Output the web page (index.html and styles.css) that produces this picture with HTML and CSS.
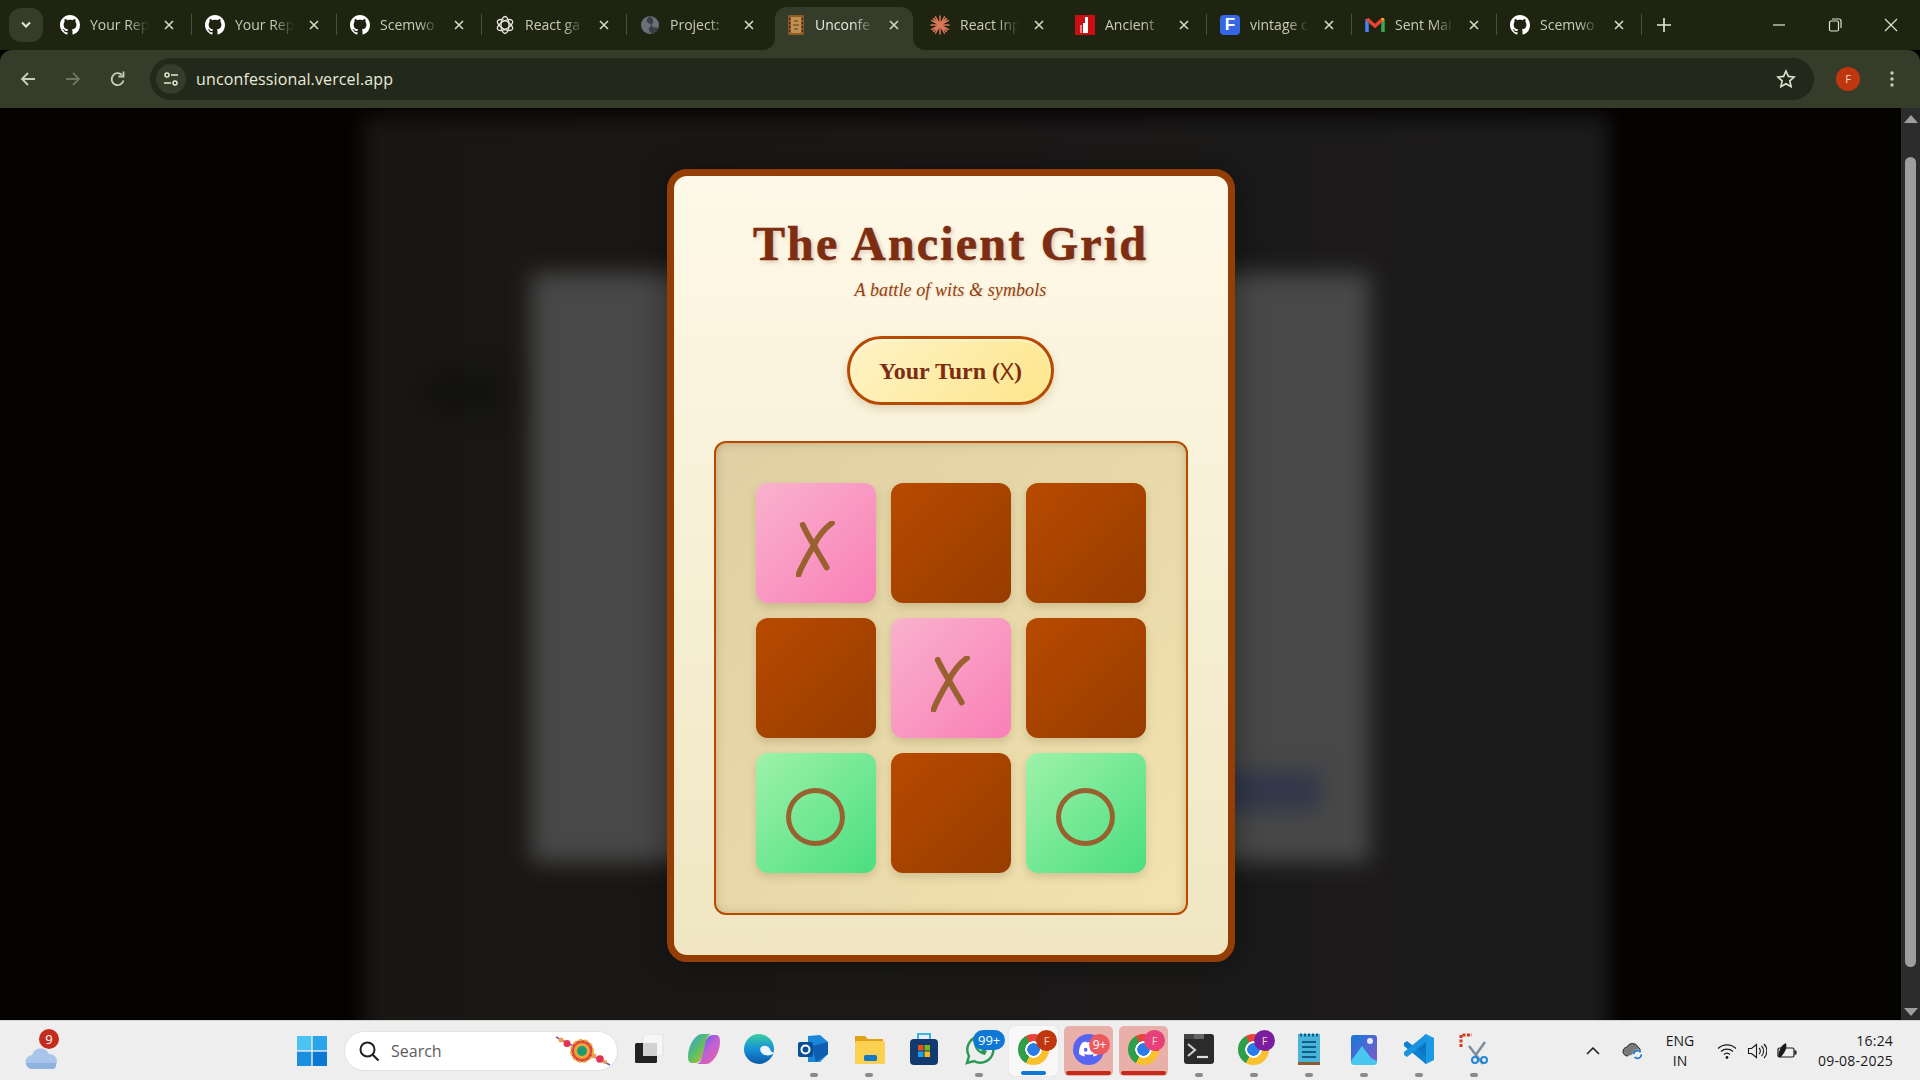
FILE: index.html
```html
<!DOCTYPE html>
<html lang="en">
<head>
<meta charset="utf-8">
<title>Unconfessional</title>
<link rel="stylesheet" href="styles.css">
</head>
<body>
<svg class="defs" width="0" height="0">
  <defs>
    <symbol id="gh" viewBox="0 0 16 16"><path fill="#fff" d="M8 0C3.58 0 0 3.58 0 8c0 3.54 2.29 6.53 5.47 7.59.4.07.55-.17.55-.38 0-.19-.01-.82-.01-1.49-2.01.37-2.53-.49-2.69-.94-.09-.23-.48-.94-.82-1.13-.28-.15-.68-.52-.01-.53.63-.01 1.08.58 1.23.82.72 1.21 1.87.87 2.33.66.07-.52.28-.87.51-1.07-1.78-.2-3.64-.89-3.64-3.95 0-.87.31-1.59.82-2.15-.08-.2-.36-1.02.08-2.12 0 0 .67-.21 2.2.82.64-.18 1.32-.27 2-.27.68 0 1.36.09 2 .27 1.53-1.04 2.2-.82 2.2-.82.44 1.1.16 1.92.08 2.12.51.56.82 1.27.82 2.15 0 3.07-1.87 3.75-3.65 3.95.29.25.54.73.54 1.48 0 1.07-.01 1.93-.01 2.2 0 .21.15.46.55.38A8.013 8.013 0 0016 8c0-4.42-3.58-8-8-8z"/></symbol>
    <symbol id="cross" viewBox="0 0 10 10"><path d="M1 1l8 8M9 1l-8 8" stroke="#d5d9c5" stroke-width="1.6" fill="none"/></symbol>
    <symbol id="markx" viewBox="0 0 40 56"><path d="M6.700 3.800C10 11 14 18 19 26c3 6 8 14 11.700 20.500M36 2C28 8 22 16 18 24 12 34 6 44 2.500 53.700" fill="none" stroke="#996030" stroke-width="5.800" stroke-linecap="round"/></symbol>
  </defs>
</svg>

<div class="tabstrip">
  <div class="tab-menu"><svg width="12" height="8" viewBox="0 0 12 8"><path d="M2 1.500l4 4 4-4" stroke="#e4e8d8" stroke-width="2" fill="none"/></svg></div>
  <div class="tabs">
    <div class="tab"><svg class="fav" viewBox="0 0 16 16"><use href="#gh"/></svg><span class="tab-title">Your Rep</span><svg class="tab-x" viewBox="0 0 10 10"><use href="#cross"/></svg></div>
    <div class="tab"><svg class="fav" viewBox="0 0 16 16"><use href="#gh"/></svg><span class="tab-title">Your Rep</span><svg class="tab-x" viewBox="0 0 10 10"><use href="#cross"/></svg></div>
    <div class="tab"><svg class="fav" viewBox="0 0 16 16"><use href="#gh"/></svg><span class="tab-title">Scemwo</span><svg class="tab-x" viewBox="0 0 10 10"><use href="#cross"/></svg></div>
    <div class="tab"><svg class="fav" viewBox="0 0 20 20"><g fill="none" stroke="#e8e8e0" stroke-width="1.300"><ellipse cx="10" cy="10" rx="8.500" ry="4" transform="rotate(30 10 10)"/><ellipse cx="10" cy="10" rx="8.500" ry="4" transform="rotate(90 10 10)"/><ellipse cx="10" cy="10" rx="8.500" ry="4" transform="rotate(150 10 10)"/></g></svg><span class="tab-title">React ga</span><svg class="tab-x" viewBox="0 0 10 10"><use href="#cross"/></svg></div>
    <div class="tab tab-plain"><svg class="fav" viewBox="0 0 20 20"><circle cx="10" cy="10" r="9" fill="#6a7078"/><path d="M10 1c-3 2-4 4-3 6s4 1 4 3-3 2-2 5 2 3 3 4c3-1 5-3 6-6-2-1-5 0-6-2s2-3 1-6-2-3-3-4z" fill="#3a3f46"/></svg><span class="tab-title">Project: </span><svg class="tab-x" viewBox="0 0 10 10"><use href="#cross"/></svg></div>
    <div class="tab tab-active"><i class="flare-l"></i><i class="flare-r"></i><svg class="fav" viewBox="0 0 18 20"><rect x="1" y="0" width="16" height="20" rx="1.500" fill="#8a5a28"/><rect x="4" y="2" width="10" height="16" fill="#c09050"/><path d="M2.500 3v14M15.500 3v14" stroke="#3a2410" stroke-width="1.200" stroke-dasharray="2 2"/><path d="M7 6h4M6 10h6M7 14h4" stroke="#5a3a1a" stroke-width="1.200"/></svg><span class="tab-title">Unconfe</span><svg class="tab-x" viewBox="0 0 10 10"><use href="#cross"/></svg></div>
    <div class="tab tab-plain"><svg class="fav" viewBox="0 0 20 20"><g stroke="#d97757" stroke-width="1.500" stroke-linecap="round"><path d="M10 1v18M1 10h18M3.600 3.600l12.800 12.800M16.400 3.600L3.600 16.400M5.500 1.800l9 16.400M14.500 1.800l-9 16.400M1.800 5.500l16.400 9M18.200 5.500l-16.400 9"/></g></svg><span class="tab-title tab-title-long">React Inp</span><svg class="tab-x" viewBox="0 0 10 10"><use href="#cross"/></svg></div>
    <div class="tab"><svg class="fav" viewBox="0 0 20 20"><rect width="20" height="20" fill="#c80f14"/><path d="M8 18V8h2V2h3v16z" fill="#fff"/><path d="M6 10v8" stroke="#f0b0b0" stroke-width="1.500"/></svg><span class="tab-title">Ancient </span><svg class="tab-x" viewBox="0 0 10 10"><use href="#cross"/></svg></div>
    <div class="tab"><span class="fav fav-f">F</span><span class="tab-title">vintage c</span><svg class="tab-x" viewBox="0 0 10 10"><use href="#cross"/></svg></div>
    <div class="tab"><svg class="fav" viewBox="0 0 20 20"><path d="M2 4v13" stroke="#4285f4" stroke-width="3.500"/><path d="M18 4v13" stroke="#34a853" stroke-width="3.500"/><path d="M2 4l8 7 8-7" stroke="#ea4335" stroke-width="3.500" fill="none"/><path d="M16 3l3 0-1 4z" fill="#fbbc04"/></svg><span class="tab-title">Sent Mai</span><svg class="tab-x" viewBox="0 0 10 10"><use href="#cross"/></svg></div>
    <div class="tab"><svg class="fav" viewBox="0 0 16 16"><use href="#gh"/></svg><span class="tab-title">Scemwo</span><svg class="tab-x" viewBox="0 0 10 10"><use href="#cross"/></svg></div>
  </div>
  <svg class="tab-plus" width="14" height="14" viewBox="0 0 14 14"><path d="M7 0v14M0 7h14" stroke="#e4e8d8" stroke-width="1.600"/></svg>
  <div class="win-controls">
    <svg width="14" height="14" viewBox="0 0 14 14"><path d="M1 7h12" stroke="#dfe3d3" stroke-width="1.200"/></svg>
    <svg width="14" height="14" viewBox="0 0 14 14"><rect x="1.500" y="3" width="9" height="10" rx="1.500" fill="none" stroke="#dfe3d3" stroke-width="1.200"/><path d="M4 1h7a2 2 0 012 2v7" fill="none" stroke="#dfe3d3" stroke-width="1.200"/></svg>
    <svg width="14" height="14" viewBox="0 0 14 14"><path d="M1 1l12 12M13 1L1 13" stroke="#dfe3d3" stroke-width="1.200"/></svg>
  </div>
</div>

<div class="toolbar">
  <div class="nav">
    <svg width="18" height="18" viewBox="0 0 18 18"><path d="M16 9H3M9 3L3 9l6 6" stroke="#c9cdb9" stroke-width="1.800" fill="none"/></svg>
    <svg width="18" height="18" viewBox="0 0 18 18"><path d="M2 9h13M9 3l6 6-6 6" stroke="#6f7461" stroke-width="1.800" fill="none"/></svg>
    <svg width="18" height="18" viewBox="0 0 18 18"><path d="M14.500 10.500A6 6 0 1 1 13 5" stroke="#c9cdb9" stroke-width="1.800" fill="none"/><path d="M14.500 1.500v5h-5" stroke="#c9cdb9" stroke-width="1.800" fill="none"/></svg>
  </div>
  <div class="omnibox">
    <span class="site-info"><svg width="16" height="16" viewBox="0 0 16 16"><g fill="none" stroke="#e4e8d8" stroke-width="1.500"><circle cx="4" cy="4" r="2"/><path d="M8 4h7M1 12h7"/><circle cx="12" cy="12" r="2"/></g></svg></span>
    <span class="url">unconfessional.vercel.app</span>
    <svg class="star" width="20" height="20" viewBox="0 0 20 20"><path d="M10 2l2.400 5.400 5.800.6-4.400 3.900 1.300 5.800L10 14.700l-5.100 3 1.300-5.800L1.800 8l5.800-.6z" fill="none" stroke="#dfe3d3" stroke-width="1.600"/></svg>
  </div>
  <span class="avatar">F</span>
  <svg class="kebab" width="4" height="18" viewBox="0 0 4 18"><g fill="#c9cdb9"><circle cx="2" cy="3" r="1.700"/><circle cx="2" cy="9" r="1.700"/><circle cx="2" cy="15" r="1.700"/></g></svg>
</div>

<div class="main">
  <div class="viewport">
    <div class="backdrop"><div class="bd-mid"></div><div class="bd-light"></div><div class="bd-blue"></div><div class="bd-dark"></div></div>
    <div class="card">
      <h1 class="title">The Ancient Grid</h1>
      <p class="subtitle">A battle of wits &amp; symbols</p>
      <div class="turn">Your Turn (<span class="turn-x">X</span>)</div>
      <div class="board">
        <div class="cell cell-x"><svg class="mark" viewBox="0 0 40 56"><use href="#markx"/></svg></div>
        <div class="cell"></div>
        <div class="cell"></div>
        <div class="cell"></div>
        <div class="cell cell-x"><svg class="mark" viewBox="0 0 40 56"><use href="#markx"/></svg></div>
        <div class="cell"></div>
        <div class="cell cell-o"><span class="ring"></span></div>
        <div class="cell"></div>
        <div class="cell cell-o"><span class="ring"></span></div>
      </div>
    </div>
  </div>
  <div class="scrollbar">
    <i class="sb-up"></i>
    <i class="sb-thumb"></i>
    <i class="sb-down"></i>
  </div>
</div>

<div class="taskbar">
  <div class="weather">
    <svg width="34" height="24" viewBox="0 0 34 24"><path d="M9 23a7 7 0 0 1-1-14 9 9 0 0 1 17-1 7.500 7.500 0 0 1 1 15z" fill="#a9c6ea"/><path d="M2 17h30v2a4 4 0 0 1-4 4H8a6 6 0 0 1-6-6z" fill="#8fb2e0"/></svg>
    <span class="weather-badge">9</span>
  </div>
  <svg class="start" width="30" height="30" viewBox="0 0 30 30"><rect width="14.300" height="14.300" fill="#4cc2f5"/><rect x="15.700" width="14.300" height="14.300" fill="#2aa4ea"/><rect y="15.700" width="14.300" height="14.300" fill="#1a8fe0"/><rect x="15.700" y="15.700" width="14.300" height="14.300" fill="#0b78d4"/></svg>
  <div class="search">
    <svg width="22" height="22" viewBox="0 0 22 22"><circle cx="9.500" cy="9.500" r="7" fill="none" stroke="#222" stroke-width="2"/><path d="M14.500 14.500l6 6" stroke="#222" stroke-width="2.200"/></svg>
    <span class="search-text">Search</span>
    <svg class="rakhi" width="58" height="32" viewBox="0 0 58 32"><path d="M2 2l54 28" stroke="#7a60b0" stroke-width="1.500"/><circle cx="7" cy="5" r="2.500" fill="#e8a050"/><circle cx="13" cy="8.500" r="3.500" fill="#e83050"/><circle cx="46" cy="24" r="3.800" fill="#e83050"/><circle cx="40" cy="21" r="2.500" fill="#e8a050"/><circle cx="51" cy="27" r="2" fill="#e8a050"/><circle cx="28" cy="16" r="11" fill="#e04040" stroke="#e8a838" stroke-width="2" stroke-dasharray="4 2"/><circle cx="28" cy="16" r="8" fill="#e8a838"/><circle cx="28" cy="16" r="5" fill="#1f9a70"/></svg>
  </div>
  <div class="apps">
    <div class="app"><svg width="30" height="30" viewBox="0 0 30 30"><rect x="9" y="0" width="20" height="22" rx="1" fill="#f6f6f6" stroke="#e0e0e0"/><rect x="1" y="9" width="22" height="20" rx="1.500" fill="#222"/><rect x="9" y="9" width="14" height="13" fill="#d2d2d2"/></svg></div>
    <div class="app"><svg width="32" height="32" viewBox="0 0 32 32"><defs><linearGradient id="cop1" x1="0" y1="0" x2="1" y2="1"><stop offset="0" stop-color="#2aa0e8"/><stop offset=".5" stop-color="#60c060"/><stop offset="1" stop-color="#f0b020"/></linearGradient><linearGradient id="cop2" x1="0" y1="0" x2="1" y2="1"><stop offset="0" stop-color="#3060e0"/><stop offset=".5" stop-color="#c060d8"/><stop offset="1" stop-color="#f06090"/></linearGradient></defs><path d="M9 3c1-1 3-2 5-2h9c-3 1-4 3-5 7l-3 13c-1 5-3 9-8 9H4c-3 0-4-3-4-6 0-8 3-16 9-21z" fill="url(#cop1)"/><path d="M23 29c-1 1-3 2-5 2H9c3-1 4-3 5-7l3-13c1-5 3-9 8-9h3c3 0 4 3 4 6 0 8-3 16-9 21z" fill="url(#cop2)"/></svg></div>
    <div class="app"><svg width="32" height="32" viewBox="0 0 32 32"><defs><linearGradient id="edge" x1="0" y1="0" x2="0" y2="1"><stop offset="0" stop-color="#38d0a0"/><stop offset=".5" stop-color="#1890d8"/><stop offset="1" stop-color="#0c5aa8"/></linearGradient></defs><circle cx="16" cy="16" r="15" fill="url(#edge)"/><path d="M31 20c-2 2-6 3-9 2-4-1-6-5-4-8 2-2 7-2 9 2 1 2 0 2 4 4z" fill="#eef5fa"/></svg></div>
    <div class="app has-dot"><svg width="32" height="30" viewBox="0 0 32 30"><path d="M10 2l12-1 8 7v12l-8 8H10z" fill="#1a88d8"/><path d="M14 12l16-4v12l-12 8z" fill="#0f5fb0"/><rect x="0" y="8" width="15" height="15" rx="2" fill="#0a4e9a"/><circle cx="7.500" cy="15.500" r="4" fill="none" stroke="#fff" stroke-width="2"/></svg></div>
    <div class="app has-dot"><svg width="32" height="32" viewBox="0 0 32 32"><path d="M2 3h10l3 3h15v6H2z" fill="#e0a010"/><rect x="2" y="8" width="30" height="23" rx="1.500" fill="#fcd050"/><rect x="11" y="22" width="13" height="6" rx="1.500" fill="#1478c8"/></svg></div>
    <div class="app"><svg width="30" height="34" viewBox="0 0 30 34"><path d="M9 7V2h12v5" fill="none" stroke="#38b8e8" stroke-width="2"/><rect x="1" y="7" width="28" height="26" rx="4" fill="#123a70"/><rect x="9" y="13" width="5.500" height="5.500" fill="#e8501c"/><rect x="15.500" y="13" width="5.500" height="5.500" fill="#7cb81c"/><rect x="9" y="19.500" width="5.500" height="5.500" fill="#1ca0e8"/><rect x="15.500" y="19.500" width="5.500" height="5.500" fill="#f8b81c"/></svg></div>
    <div class="app has-dot"><svg width="32" height="34" viewBox="0 0 32 34"><path d="M4 31l2-7A13 13 0 1 1 11 29z" fill="none" stroke="#2a9a50" stroke-width="2.500"/><path d="M11 11c0 6 5 11 11 12l2-4-4-2-2 2c-2-1-3-3-4-4l2-2-2-4z" fill="#2a9a50"/></svg><span class="badge badge-wa">99+</span></div>
    <div class="app app-open">
      <span class="chrome"></span><span class="cbadge cbadge-red">F</span><i class="indicator indicator-blue"></i>
    </div>
    <div class="app app-alert">
      <span class="disc"><svg width="20" height="20" viewBox="0 0 24 24"><path fill="#fff" d="M20.317 4.37a19.791 19.791 0 0 0-4.885-1.515.074.074 0 0 0-.079.037c-.21.375-.444.864-.608 1.25a18.27 18.27 0 0 0-5.487 0 12.64 12.64 0 0 0-.617-1.25.077.077 0 0 0-.079-.037A19.736 19.736 0 0 0 3.677 4.37a.07.07 0 0 0-.032.027C.533 9.046-.32 13.58.099 18.057a.082.082 0 0 0 .031.057 19.9 19.9 0 0 0 5.993 3.03.078.078 0 0 0 .084-.028 14.09 14.09 0 0 0 1.226-1.994.076.076 0 0 0-.041-.106 13.107 13.107 0 0 1-1.872-.892.077.077 0 0 1-.008-.128 10.2 10.2 0 0 0 .372-.292.074.074 0 0 1 .077-.01c3.928 1.793 8.18 1.793 12.062 0a.074.074 0 0 1 .078.01c.12.098.246.198.373.292a.077.077 0 0 1-.006.127 12.299 12.299 0 0 1-1.873.892.077.077 0 0 0-.041.107c.36.698.772 1.362 1.225 1.993a.076.076 0 0 0 .084.028 19.839 19.839 0 0 0 6.002-3.03.077.077 0 0 0 .032-.054c.5-5.177-.838-9.674-3.549-13.66a.061.061 0 0 0-.031-.03zM8.020 15.330c-1.183 0-2.157-1.085-2.157-2.419 0-1.333.956-2.419 2.157-2.419 1.210 0 2.176 1.096 2.157 2.420 0 1.333-.956 2.418-2.157 2.418zm7.975 0c-1.183 0-2.157-1.085-2.157-2.419 0-1.333.955-2.419 2.157-2.419 1.210 0 2.176 1.096 2.157 2.420 0 1.333-.946 2.418-2.157 2.418z"/></svg></span>
      <span class="cbadge cbadge-disc">9+</span><i class="indicator indicator-red"></i>
    </div>
    <div class="app app-alert">
      <span class="chrome"></span><span class="cbadge cbadge-pink">F</span><i class="indicator indicator-red"></i>
    </div>
    <div class="app has-dot"><svg width="30" height="30" viewBox="0 0 30 30"><rect width="30" height="30" rx="3" fill="#2b2b2b"/><rect x="10" width="10" height="5" fill="#666"/><rect width="10" height="5" fill="#444"/><path d="M4 10l7 6-7 6" stroke="#ccc" stroke-width="2.200" fill="none"/><path d="M13 23h11" stroke="#ddd" stroke-width="2.200"/></svg></div>
    <div class="app has-dot"><span class="chrome"></span><span class="cbadge cbadge-purple">F</span></div>
    <div class="app has-dot"><svg width="24" height="34" viewBox="0 0 24 34"><rect x="1" y="2" width="22" height="30" fill="#48b4d8"/><rect x="1" y="30" width="22" height="3" fill="#8a5a30"/><path d="M5 10h14M5 15h14M5 20h14M5 25h14" stroke="#0c5f88" stroke-width="2"/><path d="M3 3h18" stroke="#0c5f88" stroke-width="3" stroke-dasharray="2 2"/></svg></div>
    <div class="app has-dot"><svg width="28" height="32" viewBox="0 0 28 32"><defs><linearGradient id="ph" x1="0" y1="0" x2="1" y2="1"><stop offset="0" stop-color="#1478d8"/><stop offset="1" stop-color="#8858c8"/></linearGradient></defs><rect x="1" y="2" width="26" height="29" rx="3" fill="url(#ph)"/><circle cx="20" cy="8" r="3" fill="#e8e8f8"/><path d="M1 28l11-15 9 12 6 3v1a3 3 0 0 1-3 3H4a3 3 0 0 1-3-3z" fill="#48c8f0"/></svg></div>
    <div class="app has-dot"><svg width="32" height="32" viewBox="0 0 32 32"><path d="M23 1l8 4v22l-8 4L9 17z" fill="#1a9ae0"/><path d="M23 1v30L9 17z" fill="#0e74c8"/><path d="M1 10l3-2 19 15v8L1 13z" fill="#0f80d0"/><path d="M1 22l3 2 19-15V1L1 19z" fill="#1a94e0"/></svg></div>
    <div class="app has-dot"><svg width="30" height="34" viewBox="0 0 30 34"><path d="M2 15V3h11" fill="none" stroke="#d8381c" stroke-width="3" stroke-dasharray="3 1.500"/><path d="M10 14l14 18M26 10L16 24" stroke="#7a8ea0" stroke-width="2.500"/><circle cx="16" cy="28" r="3" fill="none" stroke="#2088d8" stroke-width="2"/><circle cx="25" cy="28" r="3" fill="none" stroke="#2088d8" stroke-width="2"/></svg></div>
  </div>
  <div class="tray">
    <svg width="14" height="8" viewBox="0 0 14 8"><path d="M1 7l6-6 6 6" stroke="#1a1a1a" stroke-width="1.500" fill="none"/></svg>
    <svg class="tray-cloud" width="22" height="18" viewBox="0 0 22 18"><path d="M6 14a4.500 4.500 0 0 1-1-9 6 6 0 0 1 11 0 4 4 0 0 1 2 5" fill="#7a7a7a" stroke="#2a2a2a" stroke-width="1"/><circle cx="15.500" cy="12.500" r="5" fill="#eee"/><circle cx="15.500" cy="12.500" r="3.800" fill="none" stroke="#1a78d0" stroke-width="1.800" stroke-dasharray="9 3"/></svg>
    <div class="lang"><span>ENG</span><span>IN</span></div>
    <svg class="tray-wifi" width="20" height="16" viewBox="0 0 20 16"><g fill="none" stroke="#1a1a1a" stroke-width="1.200"><path d="M1 5.500a13 13 0 0 1 18 0"/><path d="M4 8.500a9 9 0 0 1 12 0"/><path d="M7 11.500a4.500 4.500 0 0 1 6 0"/></g><circle cx="10" cy="14.500" r="1.400" fill="#1a1a1a"/></svg>
    <svg class="tray-vol" width="20" height="18" viewBox="0 0 20 18"><path d="M1.500 6.500h3l5-4v13l-5-4h-3z" fill="none" stroke="#1a1a1a" stroke-width="1.100"/><g fill="none" stroke="#1a1a1a" stroke-width="1.100"><path d="M12 6a4 4 0 0 1 0 6"/><path d="M14.500 4a7 7 0 0 1 0 10"/><path d="M17 2a10 10 0 0 1 0 14"/></g></svg>
    <svg class="tray-batt" width="20" height="18" viewBox="0 0 20 18"><rect x="1" y="6" width="16" height="9" rx="1.500" fill="none" stroke="#1a1a1a" stroke-width="1.200"/><rect x="17.500" y="8.500" width="2" height="4" fill="#1a1a1a"/><path d="M1 15c1-7 3-12 8-14 1 4 0 7-2 10l-3 4z" fill="#1a1a1a"/></svg>
    <div class="clock"><span>16:24</span><span>09-08-2025</span></div>
  </div>
</div>
</body>
</html>
```

FILE: styles.css
```css
* { box-sizing: border-box; }
html, body { margin: 0; height: 100%; overflow: hidden; }
body { display: flex; flex-direction: column; width: 1920px; height: 1080px; font-family: "Open Sans", "Noto Sans", sans-serif; background: #000; }
.defs { position: absolute; }

/* tab strip */
.tabstrip { display: flex; align-items: center; height: 50px; background: #1e2410; padding-left: 9px; flex: none; }
.tab-menu { display: flex; align-items: center; justify-content: center; width: 34px; height: 34px; margin-top: -1px; border-radius: 12px; background: #363c2a; flex: none; }
.tabs { display: flex; margin-left: 4px; height: 50px; flex: none; }
.tab { position: relative; display: flex; align-items: center; width: 145px; height: 50px; padding-left: 13px; flex: none; }
.tab::after { content: ""; position: absolute; right: 0; top: 14px; height: 21px; width: 1px; background: #4a5040; }
.tab-plain::after, .tab-active::after { display: none; }
.tab-active { background: #363c2a; width: 138px; margin: 7px 4px 0 3px; height: 43px; border-radius: 12px 12px 0 0; padding-left: 11px; }
.tab-active .fav { margin-top: -7px; }
.tab-active .tab-title { margin-top: -7px; margin-left: 9px; color: #e8ebdc; }
.tab-active .tab-x { left: 114px; top: 13px; }
.flare-l, .flare-r { position: absolute; bottom: 0; width: 12px; height: 12px; overflow: hidden; }
.flare-l { left: -12px; }
.flare-r { right: -12px; }
.flare-l::before, .flare-r::before { content: ""; position: absolute; width: 24px; height: 24px; border-radius: 50%; box-shadow: 0 0 0 12px #363c2a; bottom: 0; }
.flare-l::before { right: 0; }
.flare-r::before { left: 0; }
.fav { display: block; width: 20px; height: 20px; flex: none; }
.fav-f { display: flex; align-items: center; justify-content: center; border-radius: 4px; background: #3367e6; color: #fff; font: 700 17px "Liberation Sans", sans-serif; }
.tab-title { width: 59px; margin-left: 10px; overflow: hidden; white-space: pre; font-size: 14px; line-height: 20px; color: #c8ccb8; -webkit-mask-image: linear-gradient(to right, #000 65%, transparent 100%); mask-image: linear-gradient(to right, #000 65%, transparent 100%); }
.tab-title-long { width: 64px; -webkit-mask-image: linear-gradient(to right, #000 60%, transparent 92%); mask-image: linear-gradient(to right, #000 60%, transparent 92%); }
.tab-x { position: absolute; left: 117px; top: 20px; width: 10px; height: 10px; }
.tab-plus { margin-left: 15px; flex: none; }
.win-controls { display: flex; align-items: center; gap: 42px; margin-left: auto; margin-right: 22px; }

/* toolbar */
.toolbar { display: flex; align-items: center; height: 58px; background: #363c2a; border-radius: 12px 12px 0 0; flex: none; padding-bottom: 1px; }
.nav { display: flex; gap: 27px; align-items: center; width: 150px; padding-left: 19px; flex: none; }
.omnibox { display: flex; align-items: center; width: 1664px; height: 42px; border-radius: 21px; background: #22281a; padding-left: 6px; flex: none; margin-top: 1px; }
.site-info { display: flex; align-items: center; justify-content: center; width: 30px; height: 30px; border-radius: 50%; background: #363c2a; flex: none; }
.url { margin-left: 10px; font-size: 16px; color: #e8ebdc; letter-spacing: .13px; }
.star { margin-left: auto; margin-right: 18px; }
.avatar { display: flex; align-items: center; justify-content: center; width: 24px; height: 24px; margin-left: 22px; border-radius: 50%; background: #c0360f; color: #f4d8cc; font-size: 11px; flex: none; }
.kebab { margin-left: 30px; flex: none; }

/* page */
.main { display: flex; flex: 1; min-height: 0; }
.viewport { position: relative; flex: 1; display: flex; justify-content: center; align-items: flex-start; padding-top: 60px; background: #050302; overflow: hidden; border-top: 1px solid #050302; }
.backdrop { position: absolute; inset: 0; }
.bd-mid { position: absolute; left: 364px; top: 8px; width: 1244px; height: 960px; background: linear-gradient(90deg, #191714, #1c1b1c); filter: blur(10px); }
.bd-light { position: absolute; left: 531px; top: 164px; width: 839px; height: 589px; background: #484848; filter: blur(11px); }
.bd-blue { position: absolute; left: 1190px; top: 662px; width: 130px; height: 40px; background: #32384a; filter: blur(10px); }
.bd-dark { position: absolute; left: 425px; top: 268px; width: 75px; height: 30px; background: #0f0f0d; filter: blur(14px); }

.card { position: relative; width: 568px; height: 793px; padding: 40px 40px 0; border: 7px solid #943d04; border-radius: 20px; background: linear-gradient(180deg, #fef9e8 0%, #f0e6c2 100%); box-shadow: 0 0 30px rgba(0, 0, 0, .4); display: flex; flex-direction: column; align-items: center; }
.title { margin: 0; font: 700 48px/56px "Liberation Serif", serif; letter-spacing: 2.2px; color: #7c2d12; -webkit-text-stroke: .6px #7c2d12; text-shadow: 2px 2px 4px rgba(124, 45, 18, .25); white-space: nowrap; }
.subtitle { margin: 6px 0 0; font: italic 400 18px/24px "Liberation Serif", serif; letter-spacing: .1px; color: #92400e; text-shadow: 1px 1px 2px rgba(124, 45, 18, .15); }
.turn { display: flex; align-items: center; justify-content: center; width: 207px; height: 69px; margin-top: 34px; border: 3px solid #b84a00; border-radius: 35px; background: linear-gradient(135deg, #fef3c7, #fde68a); box-shadow: 0 4px 10px rgba(120, 80, 20, .2), inset 0 1px 3px rgba(255, 255, 255, .8); font: 700 24px/30px "Liberation Serif", serif; color: #7c2d12; white-space: pre; }
.turn-x { font: 400 24px/30px "Open Sans", sans-serif; }
.board { display: grid; grid-template-columns: repeat(3, 120px); grid-auto-rows: 120px; gap: 15px; width: 474px; height: 474px; margin-top: 36px; padding: 40px; border: 2px solid #b84a00; border-radius: 12px; background: linear-gradient(135deg, #dfcfa2, #f2e3b0); box-shadow: inset 0 0 10px rgba(90, 60, 20, .25); flex: none; }
.cell { display: flex; align-items: center; justify-content: center; border-radius: 12px; background: linear-gradient(135deg, #b84a00, #963c00); box-shadow: 0 4px 8px rgba(90, 60, 20, .18); }
.cell-x { background: linear-gradient(135deg, #f9b2cd, #f97fb7); }
.cell-o { background: linear-gradient(135deg, #9ef2aa, #4ade80); }
.mark { display: block; width: 40px; height: 56px; margin-top: 12px; }
.ring { display: block; width: 59px; height: 58px; margin-top: 8px; border: 5.500px solid #996030; border-radius: 50%; }

/* scrollbar */
.scrollbar { position: relative; display: flex; flex-direction: column; align-items: center; width: 19px; background: #2c2c2c; flex: none; }
.sb-up { width: 0; height: 0; margin-top: 7px; border: 7px solid transparent; border-top: 0; border-bottom: 8px solid #9e9e9e; }
.sb-thumb { width: 11px; height: 810px; margin-top: 34px; border-radius: 6px; background: #9e9e9e; }
.sb-down { width: 0; height: 0; margin-top: auto; margin-bottom: 4px; border: 7px solid transparent; border-bottom: 0; border-top: 8px solid #9e9e9e; }

/* taskbar */
.taskbar { display: flex; align-items: center; height: 60px; background: #eeeeee; border-top: 1px solid #d6d6d6; flex: none; }
.weather { position: relative; width: 60px; height: 58px; margin-left: 23px; flex: none; }
.weather svg { position: absolute; left: 1px; top: 24px; }
.weather-badge { position: absolute; left: 16px; top: 7px; width: 20px; height: 20px; border-radius: 50%; background: #c42b1c; color: #fff; font-size: 13px; line-height: 20px; text-align: center; }
.start { margin-left: 214px; flex: none; }
.search { display: flex; align-items: center; width: 274px; height: 40px; margin-left: 17px; padding-left: 13px; border-radius: 20px; background: #fff; border: 1px solid #e2e2e2; flex: none; }
.search-text { margin-left: 11px; font-size: 16px; color: #5c5c5c; }
.rakhi { margin-left: auto; margin-right: 5px; }
.apps { display: flex; margin-left: 3px; flex: none; }
.app { position: relative; display: flex; align-items: center; justify-content: center; width: 55px; height: 50px; flex: none; }
.app > svg, .app > .chrome, .app > .disc { margin-top: -3px; }
.has-dot::after { content: ""; position: absolute; left: 23.500px; bottom: -1px; width: 8px; height: 4px; border-radius: 2px; background: #8a8a8a; }
.app-open::before, .app-alert::before { content: ""; position: absolute; left: 3px; right: 3px; top: 0; bottom: 0; border-radius: 5px; }
.app-open::before { background: #f8f8f8; box-shadow: 0 0 1px rgba(0, 0, 0, .2); }
.app-alert::before { background: #e9b0aa; }
.app > * { position: relative; }
.chrome { display: block; width: 31px; height: 31px; border-radius: 50%; background: radial-gradient(circle, #2a7de8 0 6px, #fff 6.500px 8px, transparent 8.500px), conic-gradient(from -30deg, #e8453a 0 125deg, #fbc02d 125deg 240deg, #2e9e48 240deg 360deg); }
.disc { display: flex; align-items: center; justify-content: center; width: 31px; height: 31px; border-radius: 50%; background: #5865f2; }
.cbadge { position: absolute; left: 30px; top: 4px; width: 21px; height: 21px; border-radius: 50%; color: #f4d8cc; font-size: 11px; line-height: 21px; text-align: center; }
.app > .cbadge { position: absolute; }
.cbadge-red { background: #c0360f; }
.cbadge-pink { background: #e8407a; left: 28px; }
.cbadge-purple { background: #7a1ea0; left: 28px; }
.cbadge-disc { background: #ec5a5f; color: #fff; left: 28px; top: 8px; font-size: 12px; }
.app > .badge { position: absolute; left: 22px; top: 4px; height: 20px; padding: 0 5px; border-radius: 10px; background: #0f78d4; color: #fff; font-size: 13px; line-height: 20px; }
.app > .indicator { position: absolute; bottom: 1px; height: 4px; border-radius: 2px; }
.indicator-blue { left: 15px; right: 15px; background: #0f78d4; }
.indicator-red { left: 5px; right: 5px; background: #c42b1c; }
.tray { display: flex; align-items: center; margin-left: 85px; flex: none; }
.tray-cloud { margin-left: 22px; }
.lang { display: flex; flex-direction: column; align-items: center; width: 40px; margin-left: 16px; font-size: 14px; line-height: 20px; color: #1a1a1a; }
.tray-wifi { margin-left: 17px; }
.tray-vol { margin-left: 10px; }
.tray-batt { margin-left: 10px; }
.clock { display: flex; flex-direction: column; align-items: flex-end; margin-left: 21px; font-size: 14px; line-height: 20px; letter-spacing: .2px; color: #1a1a1a; }
```
